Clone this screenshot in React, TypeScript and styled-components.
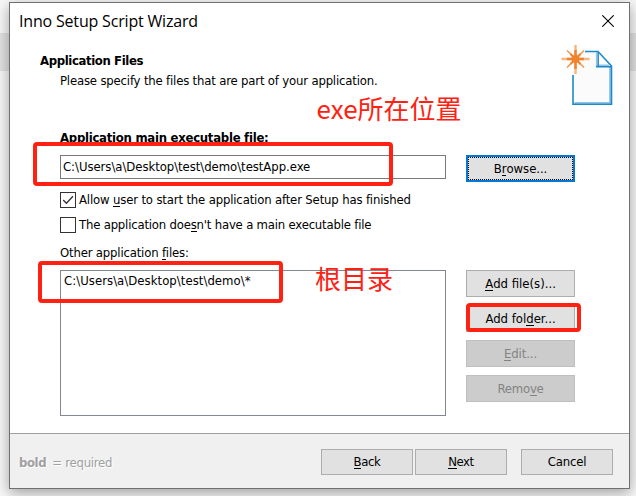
import React from 'react';
import styled, { createGlobalStyle, css } from 'styled-components';

const GlobalStyle = createGlobalStyle`
  * { box-sizing: border-box; }
  body {
    margin: 0;
    overflow: hidden;
    background: #f8f8f8;
    font-family: "DejaVu Sans Condensed", "DejaVu Sans", sans-serif;
    font-size: 13px;
    line-height: 16px;
    color: #000;
  }
  u { text-decoration: none; border-bottom: 1px solid currentColor; display: inline-block; line-height: 13px; }
`;

const Desktop = styled.main`
  position: relative;
  width: 636px;
  height: 496px;
  padding: 2px 0 0 9px;
  overflow: hidden;
  background: linear-gradient(#f8f8f8 33px, #e3e3e3 33px, #e3e3e3 71px, #f8f8f8 71px);
`;

const Window = styled.section`
  display: flex;
  flex-direction: column;
  width: 621px;
  height: 487px;
  border: 1px solid #707070;
  background: #fff;
  box-shadow: 0 4px 14px rgba(0, 0, 0, 0.36);
`;

const TitleBar = styled.header`
  display: flex;
  justify-content: space-between;
  height: 38px;
  padding: 7px 15px 0 9px;
`;

const Title = styled.h1`
  margin: 0;
  font: 400 16px/22px "Open Sans", sans-serif;
  letter-spacing: -0.18px;
`;

const CloseIcon = styled.svg`
  width: 12px;
  height: 12px;
  margin-top: 5px;
`;

const Header = styled.div`
  display: flex;
  justify-content: space-between;
  height: 89px;
  padding: 4px 15px 0 30px;
`;

const HeaderText = styled.div`
  display: flex;
  flex-direction: column;
  gap: 4px;
  padding-top: 8px;
`;

const Text = styled.div<{ $bold?: boolean; $spacing?: number; $indent?: number }>`
  height: 16px;
  white-space: pre;
  font-weight: ${p => (p.$bold ? 700 : 400)};
  letter-spacing: ${p => p.$spacing ?? 0}px;
  padding-left: ${p => p.$indent ?? 0}px;
`;

const FileIcon = styled.svg`
  width: 54px;
  height: 62px;
  flex: none;
`;

const Content = styled.div`
  display: flex;
  flex-direction: column;
  flex: 1;
  padding: 0 54px 0 50px;
`;

const FieldRow = styled.div<{ $top: number }>`
  display: flex;
  gap: 20px;
  margin-top: ${p => p.$top}px;
`;

const Field = styled.div`
  width: 386px;
  height: 24px;
  padding: 3px 2px;
  border: 1px solid #7a7a7a;
`;

const FileList = styled.div`
  width: 386px;
  height: 146px;
  padding: 2px 3px;
  border: 1px solid #828790;
`;

const Checks = styled.div`
  display: flex;
  flex-direction: column;
  gap: 9px;
  margin-top: 10px;
`;

const CheckRow = styled.label`
  display: flex;
  gap: 3px;
  height: 16px;
`;

const CheckBox = styled.svg`
  width: 16px;
  height: 16px;
  border: 1px solid #333;
`;

const ButtonColumn = styled.div`
  display: flex;
  flex-direction: column;
  gap: 8px;
`;

const Button = styled.button<{ $footer?: boolean; $focused?: boolean; $spacing?: number }>`
  display: flex;
  align-items: center;
  justify-content: center;
  flex: none;
  width: ${p => (p.$footer ? 92 : 109)}px;
  height: ${p => (p.$footer ? 26 : 27)}px;
  padding: 0;
  border: 1px solid #adadad;
  background: #e1e1e1;
  color: #000;
  font: inherit;
  letter-spacing: ${p => p.$spacing ?? 0}px;
  &:disabled {
    border-color: #bfbfbf;
    background: #ccc;
    color: #838383;
  }
  ${p =>
    p.$focused &&
    css`
      border: 2px solid #0078d7;
      outline: 1px dotted #000;
      outline-offset: -3px;
    `}
`;

const Footer = styled.footer`
  display: flex;
  align-items: flex-start;
  height: 55px;
  padding: 15px 16px 0 9px;
  border-top: 1px solid #a0a0a0;
  background: #f0f0f0;
`;

const Legend = styled.div`
  display: flex;
  gap: 6px;
  flex: 1;
  padding-top: 6px;
  color: #a0a0a0;
  text-shadow: 1px 1px #fff;
`;

const FooterButtons = styled.div`
  display: flex;
  gap: 2px;
  margin-right: 14px;
`;

const Highlight = styled.div<{ $x: number; $y: number; $w: number; $h: number }>`
  position: absolute;
  left: ${p => p.$x}px;
  top: ${p => p.$y}px;
  width: ${p => p.$w}px;
  height: ${p => p.$h}px;
  border: 4px solid #ff2112;
  border-radius: 4px;
`;

const Note = styled.div<{ $x: number; $y: number }>`
  position: absolute;
  left: ${p => p.$x}px;
  top: ${p => p.$y}px;
  font: 400 26px/30px "Noto Sans CJK SC", sans-serif;
  white-space: nowrap;
  color: #ff2112;
`;

export default function App() {
  return (
    <>
      <GlobalStyle />
      <Desktop>
        <Window>
          <TitleBar>
            <Title>Inno Setup Script Wizard</Title>
            <CloseIcon viewBox="0 0 12 12">
              <path d="M0.3 0.3 11.7 11.7M11.7 0.3 0.3 11.7" stroke="#000" strokeWidth="1.1" />
            </CloseIcon>
          </TitleBar>
          <Header>
            <HeaderText>
              <Text $bold $spacing={-0.38}>Application Files</Text>
              <Text $spacing={-0.18} $indent={20}>
                Please specify the files that are part of your application.
              </Text>
            </HeaderText>
            <FileIcon viewBox="0 0 54 62">
              <path d="M13 7h24v15h15v38H13z" fill="#fbfbfb" />
              <path d="M14.5 57.8H50V22" fill="none" stroke="#8cc4e8" strokeWidth="1.8" />
              <path d="M13 30v29.3h38.5V21L38 6.5H25" fill="none" stroke="#1e88c9" strokeWidth="1.6" />
              <path d="M36.7 7v15M37 20.2h12" fill="none" stroke="#8cc4e8" strokeWidth="1.6" />
              <path d="M38.2 7v14.8H52M36 21.8h15" fill="none" stroke="#1e88c9" strokeWidth="1.4" />
              <path d="M15.5 0v29M1.5 14h28" stroke="#f5b680" strokeWidth="2.4" />
              <path d="M15.5 5v19M7 14h17" stroke="#ee842e" strokeWidth="2.4" />
              <path d="M7 5.5 24 22.5M24 5.5 7 22.5" stroke="#f09a55" strokeWidth="1.6" />
              <path d="M10.5 9 20.5 19M20.5 9 10.5 19" stroke="#ee842e" strokeWidth="2" />
              <circle cx="15.5" cy="14" r="4" fill="#ee842e" />
            </FileIcon>
          </Header>
          <Content>
            <Text $bold $spacing={-0.27}>Application main executable file:</Text>
            <FieldRow $top={9}>
              <Field>
                <Text $spacing={-0.05}>{'C:\\Users\\a\\Desktop\\test\\demo\\testApp.exe'}</Text>
              </Field>
              <Button $focused $spacing={-0.05}>B<u>r</u>owse...</Button>
            </FieldRow>
            <Checks>
              <CheckRow>
                <CheckBox viewBox="0 0 14 14">
                  <path d="m2.2 7 3.2 3.3 6.6-7" fill="none" stroke="#333" strokeWidth="1.3" />
                </CheckBox>
                <Text $spacing={-0.16}>Allow <u>u</u>ser to start the application after Setup has finished</Text>
              </CheckRow>
              <CheckRow>
                <CheckBox viewBox="0 0 14 14" />
                <Text $spacing={-0.2}>The application doe<u>s</u>n't have a main executable file</Text>
              </CheckRow>
            </Checks>
            <FieldRow $top={12}>
              <Text $spacing={-0.18}>Other application <u>f</u>iles:</Text>
            </FieldRow>
            <FieldRow $top={9}>
              <FileList>
                <Text $spacing={0.04}>{'C:\\Users\\a\\Desktop\\test\\demo\\*'}</Text>
              </FileList>
              <ButtonColumn>
                <Button><u>A</u>dd file(s)...</Button>
                <Button>Add fol<u>d</u>er...</Button>
                <Button disabled $spacing={-0.1}><u>E</u>dit...</Button>
                <Button disabled $spacing={-0.2}>Remo<u>v</u>e</Button>
              </ButtonColumn>
            </FieldRow>
          </Content>
          <Footer>
            <Legend>
              <Text $bold $spacing={-0.4}>bold</Text>
              <Text $spacing={-0.24}>= required</Text>
            </Legend>
            <FooterButtons>
              <Button $footer $spacing={-0.4}><u>B</u>ack</Button>
              <Button $footer $spacing={-0.4}><u>N</u>ext</Button>
            </FooterButtons>
            <Button $footer $spacing={-0.2}>Cancel</Button>
          </Footer>
        </Window>
        <Highlight $x={33} $y={142} $w={360} $h={44} />
        <Highlight $x={38} $y={261} $w={245} $h={42} />
        <Highlight $x={466} $y={303} $w={115} $h={29} />
        <Note $x={316.5} $y={93}>exe所在位置</Note>
        <Note $x={315} $y={263}>根目录</Note>
      </Desktop>
    </>
  );
}
